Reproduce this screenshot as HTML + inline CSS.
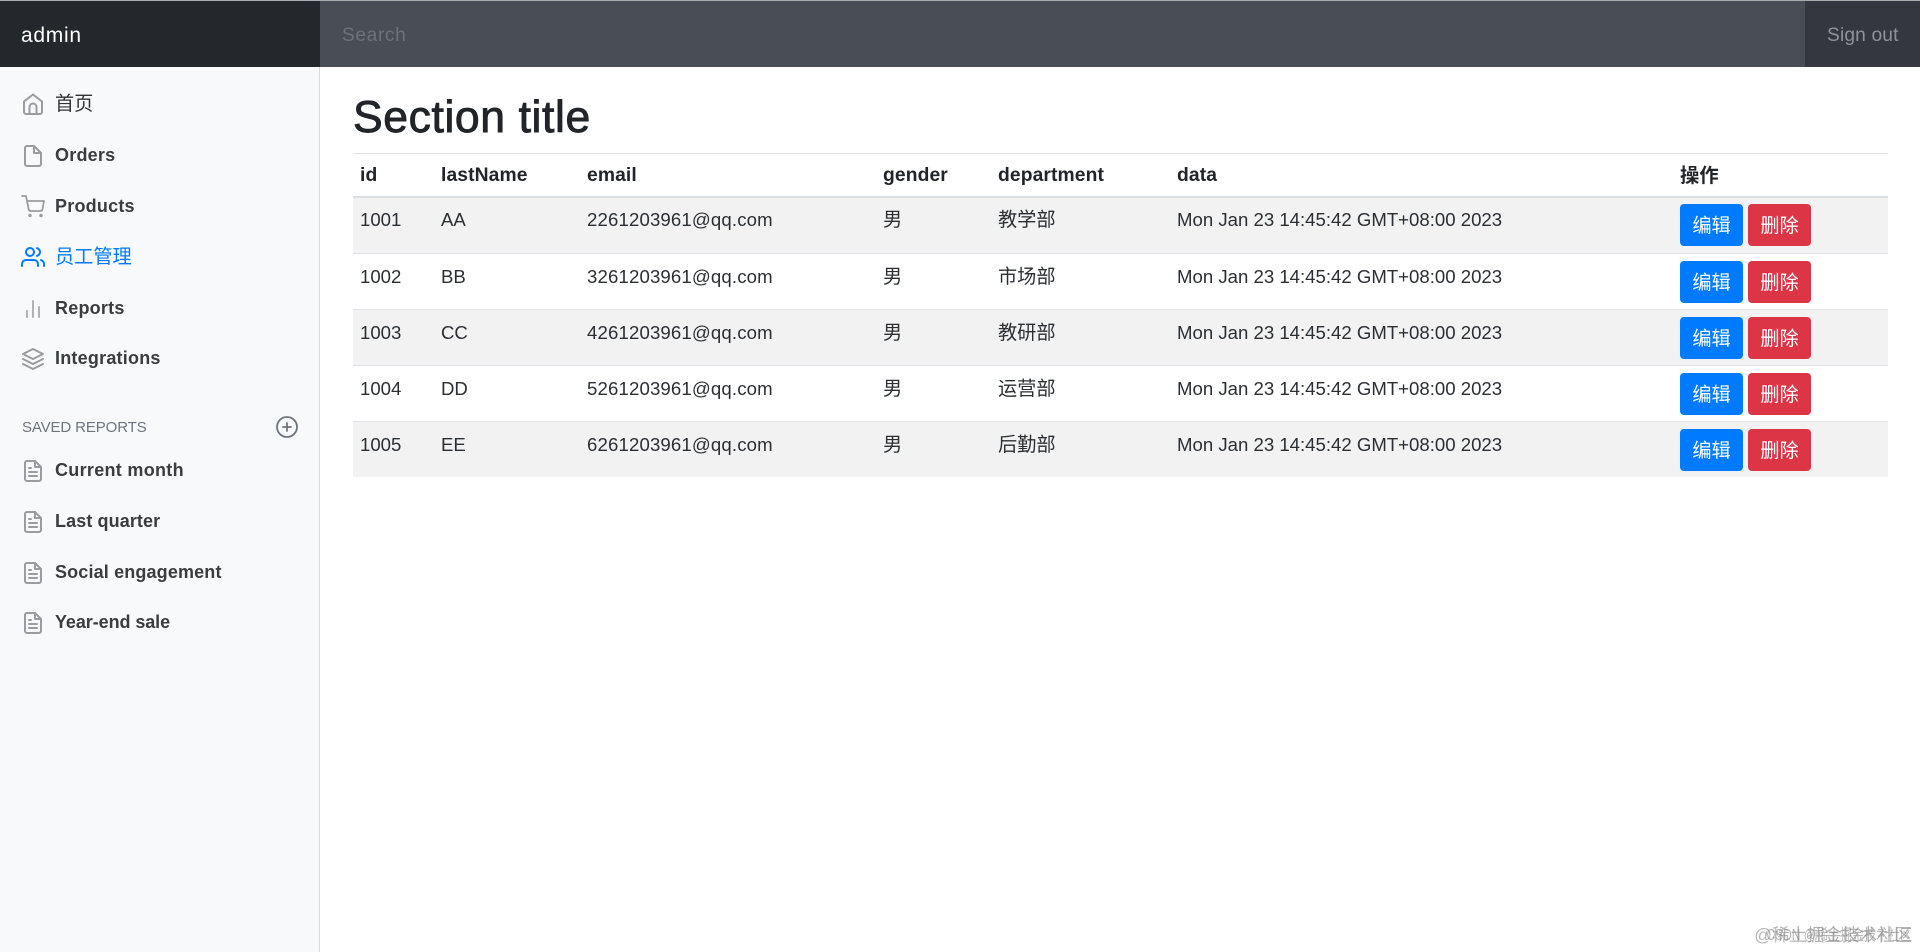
<!DOCTYPE html>
<html><head><meta charset="utf-8"><title>Dashboard</title>
<style>
*{box-sizing:border-box}
html,body{margin:0;padding:0;width:1920px;height:952px;overflow:hidden;background:#fff;position:relative}
body{font-family:"Liberation Sans","Noto Sans CJK SC",sans-serif;color:#212529}
.a{position:absolute;white-space:nowrap}
.bar{position:absolute;top:0;height:67px}
.nl{position:absolute;left:55px;font-size:18px;line-height:24px;color:#3a3d40;white-space:nowrap;font-weight:bold;letter-spacing:.22px}
.nl.c{font-weight:normal;font-size:19.2px;letter-spacing:0;color:#333;margin-top:1px}
svg.i{position:absolute;fill:none;stroke:#999ca0;stroke-width:2;stroke-linecap:round;stroke-linejoin:round}
.t{position:absolute;font-size:18.6px;line-height:24px;color:#2b2f33;white-space:nowrap;margin-top:1px}
.t.e{letter-spacing:.15px}
.t.z{font-size:19.2px;margin-top:2px}
.t.h{font-weight:bold;font-size:19.3px;letter-spacing:.1px;color:#212529}
.t.h.z{margin-top:2px}
.b{position:absolute;width:63px;height:42px;border-radius:4px;color:#fff;font-size:19.2px;line-height:46px;text-align:center;overflow:hidden}
.row{position:absolute;left:353px;width:1535px}
</style></head><body>
<div class="bar" style="left:0;width:320px;background:#24282d"></div>
<div class="bar" style="left:320px;width:1485px;background:#494e55"></div>
<div class="bar" style="left:1805px;width:115px;background:#34383e"></div>
<div class="a" style="left:0;top:0;width:1920px;height:1px;background:#a9abad"></div>
<div class="a" style="left:21px;top:24px;font-size:21px;letter-spacing:.7px;line-height:24px;color:#fff">admin</div>
<div class="a" style="left:342px;top:24px;font-size:19.2px;letter-spacing:.6px;line-height:24px;color:#6d7278">Search</div>
<div class="a" style="left:1827px;top:24px;font-size:19.2px;letter-spacing:.15px;line-height:24px;color:#8f9296">Sign out</div>

<div class="a" style="left:0;top:67px;width:320px;height:885px;background:#f8f9fb;border-right:1px solid #d9dadc"></div>

<svg class="i" style="left:21px;top:92px" width="24" height="24" viewBox="0 0 24 24"><path d="M3 9.500l9-7 9 7V20a2 2 0 0 1-2 2H5a2 2 0 0 1-2-2z"/><path d="M8.500 22v-7a3.500 3.500 0 0 1 7 0v7"/></svg>
<div class="nl c" style="top:92px">首页</div>
<svg class="i" style="left:21px;top:144px" width="24" height="24" viewBox="0 0 24 24"><path d="M13 2H6a2 2 0 0 0-2 2v16a2 2 0 0 0 2 2h12a2 2 0 0 0 2-2V9z"/><path d="M13 2v7h7"/></svg>
<div class="nl" style="top:143px">Orders</div>
<svg class="i" style="left:21px;top:195px;stroke-width:1.800" width="24" height="24" viewBox="0 0 24 24"><circle cx="9" cy="20.500" r=".8"/><circle cx="20" cy="20.500" r=".8"/><path d="M1 1h4l2.700 13.400a2 2 0 0 0 2 1.600h9.700a2 2 0 0 0 2-1.600L23 6H6"/></svg>
<div class="nl" style="top:194px">Products</div>
<svg class="i" style="left:21px;top:245px;stroke:#007bff" width="24" height="24" viewBox="0 0 24 24"><path d="M17 21v-2a4 4 0 0 0-4-4H5a4 4 0 0 0-4 4v2"/><circle cx="9" cy="7" r="4"/><path d="M23 21v-2a4 4 0 0 0-3-3.870"/><path d="M16 3.130a4 4 0 0 1 0 7.750"/></svg>
<div class="nl c" style="top:245px;color:#007bff">员工管理</div>
<svg class="i" style="left:21px;top:297px;stroke:#b0b3b6" width="24" height="24" viewBox="0 0 24 24"><path d="M18 20V10M12 20V4M6 20v-6"/></svg>
<div class="nl" style="top:296px">Reports</div>
<svg class="i" style="left:21px;top:347px" width="24" height="24" viewBox="0 0 24 24"><path d="M12 2L2 7l10 5 10-5-10-5z"/><path d="M2 17l10 5 10-5"/><path d="M2 12l10 5 10-5"/></svg>
<div class="nl" style="top:346px">Integrations</div>

<div class="a" style="left:22px;top:416px;font-size:15px;letter-spacing:-.12px;line-height:24px;color:#6c757d">SAVED REPORTS</div>
<svg class="i" style="left:275px;top:415px;stroke:#6c757d;stroke-width:1.800" width="24" height="24" viewBox="0 0 24 24"><circle cx="12" cy="12" r="10"/><path d="M12 8v8M8 12h8"/></svg>

<svg class="i" style="left:21px;top:459px" width="24" height="24" viewBox="0 0 24 24"><path d="M14 2H6a2 2 0 0 0-2 2v16a2 2 0 0 0 2 2h12a2 2 0 0 0 2-2V8z"/><path d="M14 2v6h6M16 13H8M16 17H8M10 9H8"/></svg>
<div class="nl" style="top:458px;letter-spacing:.3px">Current month</div>
<svg class="i" style="left:21px;top:510px" width="24" height="24" viewBox="0 0 24 24"><path d="M14 2H6a2 2 0 0 0-2 2v16a2 2 0 0 0 2 2h12a2 2 0 0 0 2-2V8z"/><path d="M14 2v6h6M16 13H8M16 17H8M10 9H8"/></svg>
<div class="nl" style="top:509px;letter-spacing:.1px">Last quarter</div>
<svg class="i" style="left:21px;top:561px" width="24" height="24" viewBox="0 0 24 24"><path d="M14 2H6a2 2 0 0 0-2 2v16a2 2 0 0 0 2 2h12a2 2 0 0 0 2-2V8z"/><path d="M14 2v6h6M16 13H8M16 17H8M10 9H8"/></svg>
<div class="nl" style="top:560px;letter-spacing:.15px">Social engagement</div>
<svg class="i" style="left:21px;top:611px" width="24" height="24" viewBox="0 0 24 24"><path d="M14 2H6a2 2 0 0 0-2 2v16a2 2 0 0 0 2 2h12a2 2 0 0 0 2-2V8z"/><path d="M14 2v6h6M16 13H8M16 17H8M10 9H8"/></svg>
<div class="nl" style="top:610px;letter-spacing:-.08px">Year-end sale</div>

<div class="a" style="left:353px;top:93px;font-size:44.500px;letter-spacing:.6px;line-height:50px;font-weight:normal;color:#212529;-webkit-text-stroke:.9px #212529">Section title</div>

<div class="row" style="top:153px;height:1px;background:#dee2e6"></div>
<div class="t h" style="left:360px;top:163px">id</div>
<div class="t h" style="left:441px;top:163px">lastName</div>
<div class="t h" style="left:587px;top:163px">email</div>
<div class="t h" style="left:883px;top:163px">gender</div>
<div class="t h" style="left:998px;top:163px">department</div>
<div class="t h" style="left:1177px;top:163px">data</div>
<div class="t h z" style="left:1680px;top:163px">操作</div>
<div class="row" style="top:196px;height:2px;background:#dcdfe2"></div>

<div class="row" style="top:198px;height:55px;background:#f2f2f2"></div>
<div class="row" style="top:253px;height:1px;background:#dee2e6"></div>
<div class="row" style="top:309px;height:1px;background:#dee2e6"></div>
<div class="row" style="top:310px;height:55px;background:#f2f2f2"></div>
<div class="row" style="top:365px;height:1px;background:#dee2e6"></div>
<div class="row" style="top:421px;height:1px;background:#dee2e6"></div>
<div class="row" style="top:422px;height:55px;background:#f2f2f2"></div>

<div class="t" style="left:360px;top:207px">1001</div><div class="t" style="left:441px;top:207px">AA</div><div class="t e" style="left:587px;top:207px">2261203961@qq.com</div><div class="t z" style="left:883px;top:207px">男</div><div class="t z" style="left:998px;top:207px">教学部</div><div class="t" style="left:1177px;top:207px">Mon Jan 23 14:45:42 GMT+08:00 2023</div>
<div class="b" style="left:1680px;top:204px;background:#007bff">编辑</div><div class="b" style="left:1748px;top:204px;background:#dc3545">删除</div>

<div class="t" style="left:360px;top:264px">1002</div><div class="t" style="left:441px;top:264px">BB</div><div class="t e" style="left:587px;top:264px">3261203961@qq.com</div><div class="t z" style="left:883px;top:264px">男</div><div class="t z" style="left:998px;top:264px">市场部</div><div class="t" style="left:1177px;top:264px">Mon Jan 23 14:45:42 GMT+08:00 2023</div>
<div class="b" style="left:1680px;top:261px;background:#007bff">编辑</div><div class="b" style="left:1748px;top:261px;background:#dc3545">删除</div>

<div class="t" style="left:360px;top:320px">1003</div><div class="t" style="left:441px;top:320px">CC</div><div class="t e" style="left:587px;top:320px">4261203961@qq.com</div><div class="t z" style="left:883px;top:320px">男</div><div class="t z" style="left:998px;top:320px">教研部</div><div class="t" style="left:1177px;top:320px">Mon Jan 23 14:45:42 GMT+08:00 2023</div>
<div class="b" style="left:1680px;top:317px;background:#007bff">编辑</div><div class="b" style="left:1748px;top:317px;background:#dc3545">删除</div>

<div class="t" style="left:360px;top:376px">1004</div><div class="t" style="left:441px;top:376px">DD</div><div class="t e" style="left:587px;top:376px">5261203961@qq.com</div><div class="t z" style="left:883px;top:376px">男</div><div class="t z" style="left:998px;top:376px">运营部</div><div class="t" style="left:1177px;top:376px">Mon Jan 23 14:45:42 GMT+08:00 2023</div>
<div class="b" style="left:1680px;top:373px;background:#007bff">编辑</div><div class="b" style="left:1748px;top:373px;background:#dc3545">删除</div>

<div class="t" style="left:360px;top:432px">1005</div><div class="t" style="left:441px;top:432px">EE</div><div class="t e" style="left:587px;top:432px">6261203961@qq.com</div><div class="t z" style="left:883px;top:432px">男</div><div class="t z" style="left:998px;top:432px">后勤部</div><div class="t" style="left:1177px;top:432px">Mon Jan 23 14:45:42 GMT+08:00 2023</div>
<div class="b" style="left:1680px;top:429px;background:#007bff">编辑</div><div class="b" style="left:1748px;top:429px;background:#dc3545">删除</div>

<div class="a" style="right:8px;top:925px;font-size:17.500px;line-height:20px;color:rgba(120,120,120,.55)">@稀土掘金技术社区</div>
<div class="a" style="right:8px;top:925px;font-size:12px;line-height:20px;color:rgba(120,120,120,.55);transform:scaleY(1.3)">CSDN @稀土掘金技术社区</div>
</body></html>
